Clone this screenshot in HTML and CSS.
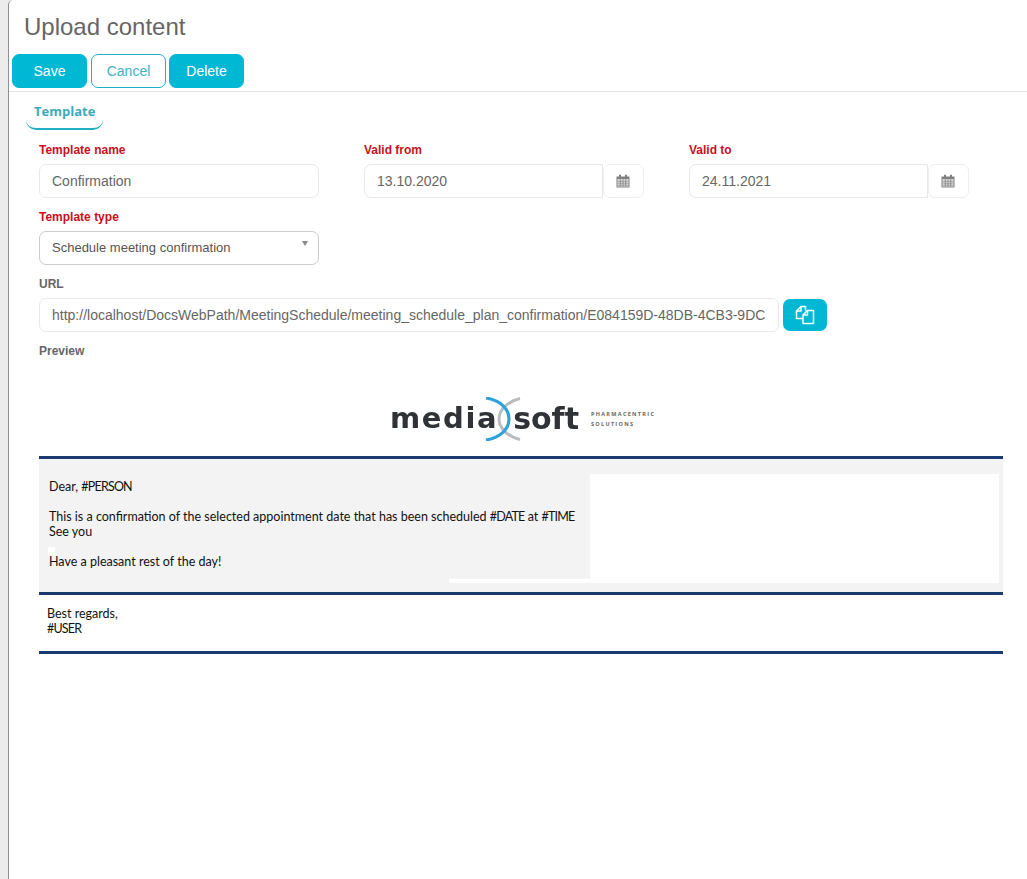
FILE: index.html
```html
<!DOCTYPE html>
<html lang="en">
<head>
<meta charset="utf-8">
<title>Upload content</title>
<link rel="stylesheet" href="styles.css">
</head>
<body>
<main class="panel">
  <h1 class="title">Upload content</h1>
  <div class="toolbar">
    <button class="btn btn-solid">Save</button>
    <button class="btn btn-outline">Cancel</button>
    <button class="btn btn-solid btn-delete">Delete</button>
  </div>
  <nav class="tabs"><span class="tab">Template</span></nav>
  <form class="form">
    <div class="grid">
      <div class="field">
        <label class="label required">Template name</label>
        <div class="input">Confirmation</div>
      </div>
      <div class="field">
        <label class="label required">Valid from</label>
        <div class="date">
          <div class="input date-input">13.10.2020</div>
          <span class="addon"><svg class="cal" viewBox="0 0 14 14"><path d="M0.5 2.5h13v11h-13z" fill="#808080"/><path d="M3 0.8h2v3h-2zM9 0.8h2v3h-2z" fill="#808080"/><path d="M1.5 5.2h11v7.3h-11z" fill="#eee"/><path d="M1.5 7.2h11M1.5 9.2h11M1.5 11.1h11M4.300 5.2v7.3M7 5.2v7.3M9.700 5.2v7.3" stroke="#808080" stroke-width=".8" fill="none"/></svg></span>
        </div>
      </div>
      <div class="field">
        <label class="label required">Valid to</label>
        <div class="date">
          <div class="input date-input">24.11.2021</div>
          <span class="addon"><svg class="cal" viewBox="0 0 14 14"><path d="M0.5 2.5h13v11h-13z" fill="#808080"/><path d="M3 0.8h2v3h-2zM9 0.8h2v3h-2z" fill="#808080"/><path d="M1.5 5.2h11v7.3h-11z" fill="#eee"/><path d="M1.5 7.2h11M1.5 9.2h11M1.5 11.1h11M4.300 5.2v7.3M7 5.2v7.3M9.700 5.2v7.3" stroke="#808080" stroke-width=".8" fill="none"/></svg></span>
        </div>
      </div>
    </div>
    <div class="field field-type">
      <label class="label required">Template type</label>
      <div class="select">Schedule meeting confirmation<span class="caret"></span></div>
    </div>
    <div class="field field-url">
      <label class="label">URL</label>
      <div class="url-row">
        <div class="input url-input">http://localhost/DocsWebPath/MeetingSchedule/meeting_schedule_plan_confirmation/E084159D-48DB-4CB3-9DC</div>
        <button type="button" class="copy"><svg class="copy-icon" viewBox="0 0 20 20" fill="none" stroke="#fff" stroke-width="1.5" stroke-linejoin="round"><path d="M8 13.500H1.500V6L6 1.500h4.500v4"/><path d="M6 1.500v4.500H1.500"/><path d="M8 10l4.500-4.500h6V18.500H8z" fill="#00b8d4"/><path d="M12.500 5.500V10H8"/></svg></button>
      </div>
    </div>
    <label class="label preview-label">Preview</label>
    <section class="preview">
      <div class="logo">
        <span class="logo-word logo-media">media</span>
        <svg class="logo-mark" viewBox="0 0 36 44" fill="none"><path d="M35 1.500C24 4 14 12 14 22S24 40 35 42.500" stroke="#b9bdc0" stroke-width="3"/><path d="M1 1C14 3 24 11 24 22S14 41 1 43" stroke="#2fa3d8" stroke-width="3.200"/></svg>
        <span class="logo-word logo-soft">soft</span>
        <span class="logo-tag">PHARMACENTRIC<br>SOLUTIONS</span>
      </div>
      <div class="mail-body">
        <div class="patch-main"></div>
        <div class="patch-strip"></div>
        <div class="patch-dot"></div>
        <p class="mail-text">Dear, <span class="token">#PERSON</span><br><br>This is a confirmation of the selected appointment date that has been scheduled <span class="token">#DATE</span> at <span class="token">#TIME</span><br>See you<br><br>Have a pleasant rest of the day!</p>
      </div>
      <div class="mail-foot">Best regards,<br><span class="token">#USER</span></div>
    </section>
  </form>
</main>
</body>
</html>
```
FILE: styles.css
```css
* { box-sizing: border-box; }
html, body { margin: 0; height: 100%; }
body {
  background: #ececec;
  font-family: "Liberation Sans", Arial, sans-serif;
  color: #666;
  padding-left: 8px;
}
.panel {
  min-height: 879px;
  background: #fff;
  border-left: 1px solid #8f8f8f;
  border-top-left-radius: 5px;
  overflow: hidden;
}
.title {
  margin: 0;
  padding: 13px 0 0 15px;
  height: 54px;
  font-size: 24px;
  line-height: 27px;
  font-weight: 400;
  color: #666;
}
.toolbar {
  display: flex;
  gap: 4px;
  padding: 0 0 3px 3px;
  border-bottom: 1px solid #e4e4e4;
}
.btn {
  width: 75px;
  height: 34px;
  border-radius: 7px;
  font: 14px/1 "Liberation Sans", Arial, sans-serif;
  padding: 0;
}
.btn-solid { background: #00b8d4; border: 1px solid #00b8d4; color: #fff; }
.btn-outline { background: #fff; border: 1px solid #1fb0c6; color: #3fb3c4; }
.btn-delete { margin-left: -1px; }
.tabs { padding: 0 0 0 17px; height: 38px; }
.tab {
  display: block;
  width: 77px;
  height: 38px;
  padding: 11px 0 0 8px;
  border-bottom: 2px solid #1fb0c6;
  border-radius: 0 0 10px 10px;
  font: 700 13px/17px "Open Sans", sans-serif;
  color: #3eaabb;
}
.form { padding: 0 24px 0 30px; }
.grid {
  display: grid;
  grid-template-columns: 280px 280px 280px;
  column-gap: 45px;
  padding-top: 13px;
}
.label {
  display: block;
  font-size: 12px;
  line-height: 14px;
  font-weight: 700;
  color: #666;
  margin-bottom: 7px;
}
.required { color: #c8101c; }
.input {
  height: 34px;
  padding: 0 12px;
  border: 1px solid #e8e8e8;
  border-radius: 7px;
  font-size: 14px;
  line-height: 32px;
  color: #666;
  white-space: nowrap;
  overflow: hidden;
  background: #fff;
}
.date { display: flex; }
.date-input { width: 239px; border-radius: 7px 0 0 7px; }
.addon {
  width: 41px;
  height: 34px;
  padding-right: 1px;
  border: 1px solid #eee;
  border-radius: 7px;
  display: flex;
  align-items: center;
  justify-content: center;
}
.cal { width: 14px; height: 14px; }
.field-type { margin-top: 12px; }
.select {
  position: relative;
  width: 280px;
  height: 34px;
  padding: 0 12px;
  border: 1px solid #ccc;
  border-radius: 7px;
  font-size: 13px;
  line-height: 32px;
  color: #555;
}
.caret {
  position: absolute;
  right: 10px;
  top: 9px;
  border-left: 3.500px solid transparent;
  border-right: 3.500px solid transparent;
  border-top: 5px solid #888;
}
.field-url { margin-top: 12px; }
.url-row { display: flex; align-items: center; gap: 4px; }
.url-input { width: 740px; }
.copy {
  width: 44px;
  height: 32px;
  padding: 0;
  border: 0;
  border-radius: 7px;
  background: #00b8d4;
  display: flex;
  align-items: center;
  justify-content: center;
}
.copy-icon { width: 20px; height: 20px; }
.preview-label { margin: 12px 0 0; }
.preview { width: 964px; }
.logo {
  height: 101px;
  display: flex;
  align-items: center;
  padding: 23px 0 0 351px;
  border-bottom: 3px solid #1a3a70;
}
.logo-word {
  font: 700 29px/1 "DejaVu Sans", sans-serif;
  color: #2f3236;
  filter: blur(.35px);
  position: relative;
}
.logo-media { letter-spacing: 1.600px; }
.logo-soft { font-size: 30px; }
.logo-mark { width: 36px; height: 44px; margin: 0 -8px 0 -13px; flex: none; }
.logo-tag {
  font: 700 5.500px/10px "Open Sans", sans-serif;
  letter-spacing: 1.300px;
  color: #666;
  margin-left: 12px;
  white-space: nowrap;
}
.mail-body {
  position: relative;
  height: 136px;
  background: #f3f3f3;
  border-bottom: 3px solid #1a3a70;
  padding: 20px 0 0 10px;
}
.mail-text {
  margin: 0;
  font: 12.500px/15px "Lato", sans-serif;
  color: #111;
  white-space: nowrap;
  position: relative;
}
.token { letter-spacing: -.8px; }
.patch-main {
  position: absolute;
  left: 551px;
  top: 15px;
  width: 409px;
  height: 105px;
  background: #fff;
}
.patch-strip {
  position: absolute;
  left: 410px;
  top: 120px;
  width: 550px;
  height: 4px;
  background: #fff;
}
.patch-dot {
  position: absolute;
  left: 9px;
  top: 88px;
  width: 7px;
  height: 8px;
  background: #fff;
}
.mail-foot {
  height: 59px;
  padding: 11px 0 0 8px;
  border-bottom: 3px solid #1a3a70;
  font: 12.500px/15px "Lato", sans-serif;
  color: #111;
}
```
